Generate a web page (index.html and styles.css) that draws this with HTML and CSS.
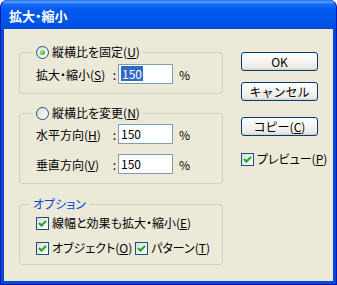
FILE: index.html
```html
<!DOCTYPE html>
<html lang="ja">
<head>
    <meta charset="UTF-8">
    <title>拡大・縮小</title>
    <link rel="stylesheet" href="styles.css">
</head>
<body>
    <div class="window">
        <div class="titlebar">拡大・縮小</div>
        <div class="client">
            <div class="left">
                <fieldset class="group">
                    <legend class="opt"><span class="radio on"></span>縦横比を固定(<u>U</u>)</legend>
                    <div class="row">
                        <span class="lbl"><span>拡大・縮小(<u>S</u>)</span><span>:</span></span>
                        <div class="field"><span class="sel">150</span></div>
                        <span class="pct">%</span>
                    </div>
                </fieldset>
                <fieldset class="group g2">
                    <legend class="opt"><span class="radio"></span>縦横比を変更(<u>N</u>)</legend>
                    <div class="row">
                        <span class="lbl"><span>水平方向(<u>H</u>)</span><span>:</span></span>
                        <div class="field">150</div>
                        <span class="pct">%</span>
                    </div>
                    <div class="row">
                        <span class="lbl"><span>垂直方向(<u>V</u>)</span><span>:</span></span>
                        <div class="field">150</div>
                        <span class="pct">%</span>
                    </div>
                </fieldset>
                <fieldset class="group g3">
                    <legend class="title">オプション</legend>
                    <div class="check-row">
                        <label class="check"><span class="box"><svg viewBox="0 0 11 11" width="11" height="11"><path d="M2 5 L4.5 7.5 L9 3" fill="none" stroke="#21a121" stroke-width="2"/></svg></span>線幅と効果も拡大・縮小(<u>E</u>)</label>
                    </div>
                    <div class="check-row two">
                        <label class="check first"><span class="box"><svg viewBox="0 0 11 11" width="11" height="11"><path d="M2 5 L4.5 7.5 L9 3" fill="none" stroke="#21a121" stroke-width="2"/></svg></span>オブジェクト(<u>O</u>)</label>
                        <label class="check"><span class="box"><svg viewBox="0 0 11 11" width="11" height="11"><path d="M2 5 L4.5 7.5 L9 3" fill="none" stroke="#21a121" stroke-width="2"/></svg></span>パターン(<u>T</u>)</label>
                    </div>
                </fieldset>
            </div>
            <div class="right">
                <button class="btn">OK</button>
                <button class="btn cancel">キャンセル</button>
                <button class="btn copy">コピー(<u>C</u>)</button>
                <label class="check preview"><span class="box"><svg viewBox="0 0 11 11" width="11" height="11"><path d="M2 5 L4.5 7.5 L9 3" fill="none" stroke="#21a121" stroke-width="2"/></svg></span>プレビュー(<u>P</u>)</label>
            </div>
        </div>
    </div>
</body>
</html>
```
FILE: styles.css
```css
body {
    margin: 0;
    padding: 0;
    font-family: "Noto Sans CJK JP", "DejaVu Sans", sans-serif;
    font-size: 12px;
    font-feature-settings: "palt";
    color: #000;
}
.window {
    width: 337px;
    height: 285px;
    box-sizing: border-box;
    display: flex;
    flex-direction: column;
    background: #0846d8;
    border: 1px solid #0019b8;
    border-top: none;
    border-radius: 7px 7px 0 0;
    padding: 0 3px 3px;
    overflow: hidden;
}
.titlebar {
    height: 29px;
    margin: 0 -3px;
    padding-left: 8px;
    padding-top: 2px;
    box-sizing: border-box;
    display: flex;
    align-items: center;
    color: #fff;
    font-size: 13px;
    font-weight: bold;
    border-radius: 7px 7px 0 0;
    background: linear-gradient(to bottom, #1a6cf0 0, #5ea2ff 2px, #1a6ef5 4px, #0058ee 10px, #0056ea 20px, #0050e2 26px, #0048d8 29px);
}
.client {
    flex: 1;
    background: #ece9d8;
    display: flex;
    padding: 15px 0 0 15px;
}
.left {
    width: 204px;
    display: flex;
    flex-direction: column;
}
.group {
    margin: 0;
    padding: 4px 8px 9px 16px;
    border: 1px solid #d0d0bf;
    border-radius: 3px;
    min-width: 0;
}
.g2 {
    margin-top: 11px;
    padding-top: 3px;
}
.g3 {
    margin-top: 12px;
    padding-top: 3px;
    padding-bottom: 8px;
}
.opt {
    height: 16px;
    line-height: 16px;
    margin-left: -3px;
    padding: 0 2px 0 3px;
    display: flex;
    align-items: center;
}
.title {
    height: 16px;
    line-height: 16px;
    margin-left: -7px;
    padding: 0 4px;
    color: #0046d5;
}
.radio {
    width: 11px;
    height: 11px;
    border: 1px solid #1c5180;
    border-radius: 50%;
    background: linear-gradient(135deg, #dcdcd7, #fff);
    margin-right: 3px;
    display: flex;
    align-items: center;
    justify-content: center;
}
.radio.on::after {
    content: "";
    width: 5px;
    height: 5px;
    border-radius: 50%;
    background: radial-gradient(circle at 35% 35%, #8ff08a, #21a121);
}
.row {
    display: flex;
    align-items: center;
    height: 20px;
}
.row + .row {
    margin-top: 10px;
}
.lbl {
    width: 82px;
    display: flex;
    justify-content: space-between;
    padding-right: 2px;
    box-sizing: border-box;
}
.field {
    width: 55px;
    height: 20px;
    box-sizing: border-box;
    border: 1px solid #7f9db9;
    background: #fff;
    padding-left: 2px;
    line-height: 18px;
}
.sel {
    display: inline-block;
    background: #316ac5;
    color: #fff;
    line-height: 15px;
    padding: 0 1px;
}
.pct {
    margin-left: 6px;
}
.check-row {
    display: flex;
    align-items: center;
    height: 16px;
}
.two {
    margin-top: 9px;
}
.two .first {
    width: 99px;
}
.check {
    display: flex;
    align-items: center;
    line-height: 16px;
    white-space: nowrap;
}
.box {
    width: 11px;
    height: 11px;
    border: 1px solid #1c5180;
    background: linear-gradient(135deg, #dcdcd7, #fff);
    margin-right: 3px;
    display: flex;
}
.right {
    margin-left: 18px;
    padding-top: 8px;
    display: flex;
    flex-direction: column;
    align-items: flex-start;
}
.btn {
    width: 77px;
    height: 19px;
    padding: 0;
    font-family: inherit;
    font-size: 12px;
    line-height: 17px;
    color: #000;
    border: 1px solid #003c74;
    border-radius: 3px;
    background: linear-gradient(to bottom, #fff 0, #f7f6f2 40%, #ecebe6 85%, #d6d0c5 100%);
}
.cancel {
    margin-top: 11px;
}
.copy {
    margin-top: 16px;
}
.preview {
    margin-top: 15px;
}
```
